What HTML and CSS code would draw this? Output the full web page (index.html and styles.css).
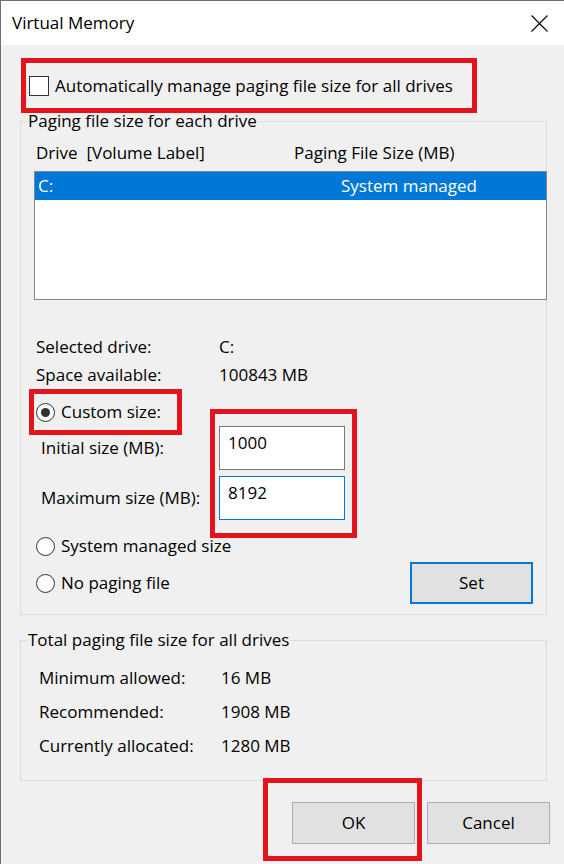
FILE: index.html
```html
<!DOCTYPE html>
<html>
<head>
<meta charset="utf-8">
<title>Virtual Memory</title>
<link rel="stylesheet" href="styles.css">
</head>
<body>
<div class="dialog">
  <div class="titlebar">
    <span class="title">Virtual Memory</span>
    <svg class="close" width="17" height="17" viewBox="0 0 17 17"><path d="M0.5 0.5 L16.5 16.5 M16.5 0.5 L0.5 16.5" stroke="#000" stroke-width="1.1" fill="none"/></svg>
  </div>
  <div class="content">
    <label class="auto-row"><span class="checkbox"></span><span>Automatically manage paging file size for all drives</span></label>

    <fieldset class="group group-drive">
      <legend>Paging file size for each drive</legend>
      <div class="list-head"><span class="col-drive">Drive&nbsp;&nbsp;[Volume Label]</span><span>Paging File Size (MB)</span></div>
      <div class="listbox">
        <div class="sel-row"><span class="col-c">C:</span><span>System managed</span></div>
      </div>
      <div class="kv kv-first"><span class="k">Selected drive:</span><span>C:</span></div>
      <div class="kv"><span class="k">Space available:</span><span>100843 MB</span></div>
      <div class="radio-row custom"><span class="radio checked"></span><span>Custom size:</span></div>
      <div class="size-row first"><span class="size-label">Initial size (MB):</span><div class="input">1000</div></div>
      <div class="size-row"><span class="size-label">Maximum size (MB):</span><div class="input focused">8192</div></div>
      <div class="radio-row sys"><span class="radio"></span><span>System managed size</span></div>
      <div class="last-row">
        <div class="radio-row"><span class="radio"></span><span>No paging file</span></div>
        <div class="btn set">Set</div>
      </div>
    </fieldset>

    <fieldset class="group group-total">
      <legend>Total paging file size for all drives</legend>
      <div class="tot tot-first"><span class="tk">Minimum allowed:</span><span>16 MB</span></div>
      <div class="tot"><span class="tk">Recommended:</span><span>1908 MB</span></div>
      <div class="tot"><span class="tk">Currently allocated:</span><span>1280 MB</span></div>
    </fieldset>

    <div class="buttons">
      <div class="btn">OK</div>
      <div class="btn">Cancel</div>
    </div>
  </div>
</div>
<div class="mark mark-auto"></div>
<div class="mark mark-custom"></div>
<div class="mark mark-inputs"></div>
<div class="mark mark-ok"></div>
</body>
</html>
```
FILE: styles.css
```css
* { box-sizing: border-box; }
html, body { margin: 0; padding: 0; }
body {
  position: relative;
  width: 564px;
  height: 864px;
  overflow: hidden;
  font-family: "Open Sans", "Noto Sans", sans-serif;
  font-size: 17px;
  line-height: 24px;
  color: #000;
  background: #f0f0f0;
}
.dialog {
  height: 864px;
  border-top: 1px solid #6f6f6f;
  border-left: 1px solid #6f6f6f;
  display: flex;
  flex-direction: column;
}
.titlebar {
  height: 44px;
  flex: none;
  background: #fff;
  display: flex;
  align-items: center;
  justify-content: space-between;
  padding: 0 16px 0 11px;
}
.close { display: block; }
.content {
  flex: 1;
  padding: 0 17px 0 19px;
}
.auto-row {
  display: flex;
  align-items: center;
  gap: 6px;
  height: 24px;
  margin-top: 29px;
  padding-left: 9px;
}
.checkbox {
  width: 20px;
  height: 20px;
  border: 1px solid #333;
  background: #fff;
  flex: none;
}
.group {
  margin: 11px 0 0;
  padding: 0 0 10px 0;
  border: 1px solid #dcdcdc;
  min-width: 0;
}
.group legend {
  padding: 0 1px;
  margin-left: 6px;
  line-height: 24px;
}
.list-head {
  display: flex;
  margin: 8px 0 0 15px;
}
.col-drive { width: 258px; }
.listbox {
  margin: 6px -1px 0 13px;
  height: 129px;
  border: 1px solid #828790;
  background: #fff;
}
.sel-row {
  display: flex;
  height: 28px;
  line-height: 28px;
  background: #0078d7;
  color: #fff;
  padding-left: 3px;
}
.col-c { width: 303px; }
.kv { display: flex; margin: 4px 0 0 15px; }
.kv-first { margin-top: 35px; }
.kv .k { width: 183px; }
.radio-row {
  display: flex;
  align-items: center;
  gap: 6px;
  margin-left: 15px;
}
.radio {
  width: 19px;
  height: 19px;
  border: 1px solid #333;
  border-radius: 50%;
  background: #fff;
  flex: none;
  display: flex;
  align-items: center;
  justify-content: center;
}
.radio.checked::after {
  content: "";
  width: 9px;
  height: 9px;
  border-radius: 50%;
  background: #333;
}
.custom { margin-top: 13px; }
.size-row {
  display: flex;
  align-items: center;
  margin: 6px 0 0 20px;
}
.size-row.first { margin-top: 2px; }
.size-label { width: 178px; }
.input {
  width: 126px;
  height: 44px;
  border: 1px solid #7a7a7a;
  background: #fff;
  padding: 4px 0 0 8px;
}
.input.focused { border-color: #0078d7; }
.sys { margin-top: 14px; }
.last-row {
  display: flex;
  align-items: center;
  justify-content: space-between;
  margin-top: 4px;
}
.btn {
  width: 123px;
  height: 42px;
  border: 1px solid #adadad;
  background: #e1e1e1;
  display: flex;
  align-items: center;
  justify-content: center;
}
.btn.set {
  border: 2px solid #0078d7;
  margin-right: 13px;
}
.group-total { margin-top: 13px; padding-bottom: 22px; }
.tot { display: flex; margin: 10px 0 0 18px; }
.tot-first { margin-top: 14px; }
.tk { width: 182px; }
.buttons {
  display: flex;
  justify-content: flex-end;
  gap: 12px;
  margin: 21px -3px 0 0;
}
.mark {
  position: absolute;
  border: 5px solid #e3141c;
}
.mark-auto { left: 21px; top: 58px; width: 456px; height: 55px; }
.mark-custom { left: 29px; top: 389px; width: 153px; height: 46px; }
.mark-inputs { left: 210px; top: 409px; width: 147px; height: 129px; }
.mark-ok { left: 263px; top: 778px; width: 159px; height: 83px; }
```
